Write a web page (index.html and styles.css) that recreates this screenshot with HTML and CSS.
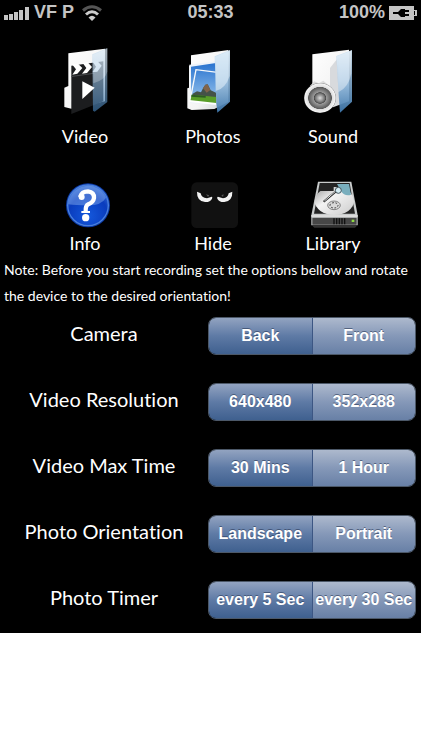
FILE: index.html
```
<!DOCTYPE html>
<html lang="en">
<head>
    <meta charset="UTF-8">
    <meta name="viewport" content="width=device-width, initial-scale=1.0">
    <title>Recorder</title>
    <link rel="stylesheet" href="styles.css">
</head>
<body>
    <div class="app">
        <!-- Status bar -->
        <header class="status">
            <div class="carrier">
                <svg width="26" height="14" viewBox="0 0 26 14" aria-hidden="true">
                    <path fill="#c4c4c4" d="M0 9h4v5H0zM5 8h4v6H5zM10 6h4v8h-4zM15 4h4v10h-4zM21 1h4v13h-4z"/>
                </svg>
                <span>VF P</span>
                <svg class="wifi" width="22" height="16" viewBox="0 0 22 16" aria-hidden="true">
                    <path fill="none" stroke="#555" stroke-width="3" d="M2 5.500Q11-2 20 5.500"/>
                    <path fill="none" stroke="#ccc" stroke-width="3" d="M5 9.500Q11 4 17 9.500"/>
                    <path fill="#ccc" d="M7.500 12.500Q11 9 14.500 12.500L11 16z"/>
                </svg>
            </div>
            <span class="time">05:33</span>
            <div class="battery">
                <span>100%</span>
                <svg width="28" height="14" viewBox="0 0 28 14" aria-hidden="true">
                    <path fill="#c4c4c4" d="M0 0h25v4h3v6h-3v4H0z"/>
                    <path fill="#000" d="M4 6h5l3-3h4v1h4v2h-4v2h4v2h-4v1h-4l-3-3H4zM25 5h1v4h-1z"/>
                </svg>
            </div>
        </header>

        <!-- Main menu -->
        <nav class="menu">
            <button class="item" type="button">
                <svg width="60" height="78" viewBox="15 18 180 234" aria-hidden="true">
                    <defs>
                        <linearGradient id="paper" x1="0" y1="0" x2="1" y2="1">
                            <stop offset="0" stop-color="#fff"/>
                            <stop offset="0.6" stop-color="#f4f4f4"/>
                            <stop offset="1" stop-color="#c8ccd0"/>
                        </linearGradient>
                        <linearGradient id="glass" x1="0" y1="0" x2="0" y2="1">
                            <stop offset="0" stop-color="#cfe3f3" stop-opacity="0.95"/>
                            <stop offset="0.5" stop-color="#8fb8dc" stop-opacity="0.85"/>
                            <stop offset="1" stop-color="#3f78ad" stop-opacity="0.95"/>
                        </linearGradient>
                    </defs>
                    <path fill="url(#paper)" d="M55 40L165 26V184L64 206L43 201V143L55 138z"/>
                    <path fill="#1c1d1f" d="M64 77L160 64V184L64 222z"/>
                    <path fill="#fff" d="M66 73L84 71L97 84L82 101L67 104L78 88zM98 69L113 67L126 81L111 99L96 101L109 84zM128 65L142 63L155 77L142 95L127 97L138 80z"/>
                    <path fill="#4b4d50" d="M64 108L133 98V101L64 111z"/>
                    <path fill="url(#glass)" fill-opacity="0.7" d="M127 43L172 24V186L134 215L129 212z"/>
                    <path fill="#fff" fill-opacity="0.25" d="M129 44L172 26V95Q165 120 130 130z"/>
                    <path fill="#fff" d="M97 124L134 143L97 177z"/>
                </svg>
                <span>Video</span>
            </button>
            <button class="item" type="button">
                <svg width="60" height="78" viewBox="24 18 180 234" aria-hidden="true">
                    <defs>
                        <linearGradient id="sky" x1="0" y1="0" x2="0" y2="1">
                            <stop offset="0" stop-color="#2973cf"/>
                            <stop offset="1" stop-color="#9cc7ee"/>
                        </linearGradient>
                    </defs>
                    <path fill="url(#paper)" d="M48 46L160 30V186L118 207L50 210L37 205V145L42 143V78L48 75z"/>
                    <path fill="#edf3fa" d="M43 74L123 64V194L45 189z"/>
                    <path fill="url(#sky)" d="M48 80L123 69V188L48 182z"/>
                    <path fill="none" stroke="#f7f9fb" stroke-width="4" d="M45 183L63 89L151 100"/>
                    <path fill="#445248" d="M53 161L66 154L78 157L84 145L91 134L98 133L107 151L123 158V175H51z"/>
                    <path fill="#80644c" d="M84 145L91 134L98 133L106 150L95 158z"/>
                    <path fill="#599e29" d="M50 164L85 167L124 171V191L46 184z"/>
                    <path fill="#2d5d23" d="M50 164L92 168V173L49 170z"/>
                    <path fill="#fff" d="M43 180L124 189V194L43 186z"/>
                    <path fill="url(#glass)" d="M119 49L165 30V185L127 218L124 190z"/>
                    <path fill="#e5f2fb" fill-opacity="0.55" d="M120 50L164 32V108Q151 147 122 153z"/>
                </svg>
                <span>Photos</span>
            </button>
            <button class="item" type="button">
                <svg width="60" height="78" viewBox="27 18 180 234" aria-hidden="true">
                    <defs>
                        <radialGradient id="cone">
                            <stop offset="0" stop-color="#ddd"/>
                            <stop offset="0.3" stop-color="#707070"/>
                            <stop offset="0.36" stop-color="#484848"/>
                            <stop offset="0.4" stop-color="#999"/>
                            <stop offset="0.72" stop-color="#5a5a5a"/>
                            <stop offset="0.76" stop-color="#ddd"/>
                            <stop offset="0.95" stop-color="#f4f4f4"/>
                            <stop offset="1" stop-color="#888"/>
                        </radialGradient>
                    </defs>
                    <path fill="url(#paper)" d="M55 43L165 29V184L117 202L55 190z"/>
                    <path fill="#d8dadd" d="M108 84L124 64L136 51V192L108 188z"/>
                    <path fill="url(#glass)" d="M127 48L174 30V185L138 218L134 164z"/>
                    <path fill="#fff" fill-opacity="0.4" d="M128 49L172 32V100Q164 143 133 157z"/>
                    <path fill="#ddd" d="M47 139L61 124L74 130L88 122L107 138z"/>
                    <ellipse cx="78" cy="174" rx="48" ry="45" fill="url(#cone)"/>
                </svg>
                <span>Sound</span>
            </button>
            <button class="item" type="button">
                <svg width="60" height="50" viewBox="15 18 180 150" aria-hidden="true">
                    <defs>
                        <radialGradient id="ball" cx="0.5" cy="0.75" r="0.75">
                            <stop offset="0" stop-color="#1458dc"/>
                            <stop offset="0.65" stop-color="#0a3cbd"/>
                            <stop offset="1" stop-color="#3a72d8"/>
                        </radialGradient>
                    </defs>
                    <circle cx="114" cy="91" r="66" fill="#0b3aa8"/>
                    <circle cx="114" cy="91" r="61" fill="url(#ball)" stroke="#4a80dc" stroke-width="4"/>
                    <path fill="#9cc0f5" fill-opacity="0.4" d="M55 88A59 59 0 0 1 168 68Q155 91 114 91Q76 91 55 88z"/>
                    <path fill="none" stroke="#fff" stroke-width="13" d="M90 66Q95 49 114 49Q133 51 132 69Q130 82 115 88Q106 92 107 111"/>
                    <circle cx="95" cy="66" r="9" fill="#fff"/>
                    <path fill="#fff" d="M94 108H120V114H94z"/>
                    <circle cx="107" cy="128" r="11" fill="#fff"/>
                </svg>
                <span>Info</span>
            </button>
            <button class="item" type="button">
                <svg width="60" height="50" viewBox="25 18 180 150" aria-hidden="true">
                    <rect x="50" y="22" width="140" height="137" rx="16" fill="#111"/>
                    <path fill="#f2f2f2" d="M67 50L78 55Q80 68 97 70L109 66Q115 64 112 71Q106 82 91 81Q66 78 67 50zM173 50L162 55Q160 68 145 70L132 66Q126 64 128 71Q134 82 149 81Q174 78 173 50z"/>
                    <path fill="#555" d="M94 58L104 61L100 66zM147 58L140 61L145 66z"/>
                </svg>
                <span>Hide</span>
            </button>
            <button class="item" type="button">
                <svg width="60" height="50" viewBox="24 18 180 150" aria-hidden="true">
                    <defs>
                        <linearGradient id="platter" x1="0" y1="0" x2="1" y2="1">
                            <stop offset="0" stop-color="#999"/>
                            <stop offset="0.4" stop-color="#f3f3f3"/>
                            <stop offset="1" stop-color="#ccc"/>
                        </linearGradient>
                    </defs>
                    <path fill="#c9cccc" d="M69 20H169L188 121V151H49V121z"/>
                    <path fill="#242424" d="M74 24H164L180 116H57z"/>
                    <ellipse cx="118" cy="78" rx="59" ry="42" fill="url(#platter)"/>
                    <path fill="#242424" d="M75 34H116V48H75z"/>
                    <path fill="#79aebd" d="M126 27H162L168 59Q150 66 137 47z"/>
                    <ellipse cx="117" cy="91" rx="19" ry="13" fill="#d8d8d8" stroke="#555" stroke-width="2"/>
                    <path stroke="#333" stroke-width="3" stroke-dasharray="5 5" fill="none" d="M105 91A12 8 0 1 1 129 91A12 8 0 1 1 105 91"/>
                    <path stroke="#222" stroke-width="6" d="M86 80L127 46"/>
                    <path stroke="#e3e7e8" stroke-width="3" d="M88 78L127 44"/>
                    <circle cx="130" cy="46" r="9" fill="#d5edf4" stroke="#40535b" stroke-width="3"/>
                    <path fill="#dcdcdc" d="M49 120H188V127H49z"/>
                    <path fill="#474747" d="M52 128H185V149H52z"/>
                    <path stroke="#111" stroke-width="4" d="M117 130V148M125 130V148M133 130V148M141 130V148M149 130V148"/>
                    <path fill="#8eda43" d="M170 134H178V141H170z"/>
                    <path fill="#333" d="M52 152H186L180 158H58z"/>
                </svg>
                <span>Library</span>
            </button>
        </nav>

        <p class="note">Note: Before you start recording set the options bellow and rotate the device to the desired orientation!</p>

        <!-- Recording options -->
        <form class="options">
            <div class="row" role="radiogroup" aria-labelledby="camera">
                <span class="name" id="camera">Camera</span>
                <div class="segments">
                    <label><input type="radio" name="camera" checked><span>Back</span></label>
                    <label><input type="radio" name="camera"><span>Front</span></label>
                </div>
            </div>
            <div class="row" role="radiogroup" aria-labelledby="resolution">
                <span class="name" id="resolution">Video Resolution</span>
                <div class="segments">
                    <label><input type="radio" name="resolution" checked><span>640x480</span></label>
                    <label><input type="radio" name="resolution"><span>352x288</span></label>
                </div>
            </div>
            <div class="row" role="radiogroup" aria-labelledby="maxtime">
                <span class="name" id="maxtime">Video Max Time</span>
                <div class="segments">
                    <label><input type="radio" name="maxtime" checked><span>30 Mins</span></label>
                    <label><input type="radio" name="maxtime"><span>1 Hour</span></label>
                </div>
            </div>
            <div class="row" role="radiogroup" aria-labelledby="orientation">
                <span class="name" id="orientation">Photo Orientation</span>
                <div class="segments">
                    <label><input type="radio" name="orientation" checked><span>Landscape</span></label>
                    <label><input type="radio" name="orientation"><span>Portrait</span></label>
                </div>
            </div>
            <div class="row" role="radiogroup" aria-labelledby="timer">
                <span class="name" id="timer">Photo Timer</span>
                <div class="segments">
                    <label><input type="radio" name="timer" checked><span>every 5 Sec</span></label>
                    <label><input type="radio" name="timer"><span>every 30 Sec</span></label>
                </div>
            </div>
        </form>
    </div>
</body>
</html>
```
FILE: styles.css
```
* {
    box-sizing: border-box;
}
body {
    margin: 0;
    background-color: #fff;
    font-family: Lato, sans-serif;
    font-variant-ligatures: none;
    color: #fff;
}
.app {
    margin-right: 2px;
    padding-bottom: 14px;
    background-color: #000;
}
.status {
    display: grid;
    grid-template-columns: 1fr auto 1fr;
    align-items: center;
    height: 25px;
    padding: 0 4px;
    font-family: "Liberation Sans", Arial, sans-serif;
    font-size: 18px;
    font-weight: bold;
    color: #c4c4c4;
}
.carrier,
.battery {
    display: flex;
    align-items: center;
    gap: 4px;
}
.battery {
    justify-content: flex-end;
}
.wifi {
    margin-left: 3px;
}
.menu {
    display: grid;
    grid-template-columns: 8fr 8fr 7fr;
    row-gap: 33px;
    padding: 21px 32px 0 21px;
}
.item {
    display: flex;
    flex-direction: column;
    align-items: center;
    padding: 0;
    border: none;
    background: none;
    color: #fff;
    font-family: inherit;
    font-size: 18px;
    line-height: 24px;
    cursor: pointer;
}
.note {
    margin: 2px 0 8px;
    padding: 0 4px;
    font-size: 14px;
    line-height: 26px;
}
.options {
    display: grid;
    gap: 28px;
    padding-right: 5px;
}
.row {
    display: grid;
    grid-template-columns: 1fr 1fr;
    align-items: center;
}
.name {
    padding-bottom: 6px;
    font-size: 20px;
    text-align: center;
    white-space: nowrap;
}
.segments {
    display: flex;
    height: 38px;
    border: 1px solid #4c5868;
    border-radius: 8px;
    overflow: hidden;
    font-family: "Liberation Sans", Arial, sans-serif;
    font-size: 16px;
    font-weight: bold;
    white-space: nowrap;
}
.segments label {
    flex: 1 1 0;
    min-width: 0;
    cursor: pointer;
}
.segments label + label {
    border-left: 1px solid #3c5683;
}
.segments input {
    position: absolute;
    opacity: 0;
}
.segments span {
    display: flex;
    align-items: center;
    justify-content: center;
    height: 100%;
    background: linear-gradient(#adb9cd, #8598b8 50%, #6880a6);
    text-shadow: 0 -1px 0 rgba(40, 55, 85, 0.6);
}
.segments input:checked + span {
    background: linear-gradient(#92a3c0, #5e7aa5 50%, #3f608f);
}
```
